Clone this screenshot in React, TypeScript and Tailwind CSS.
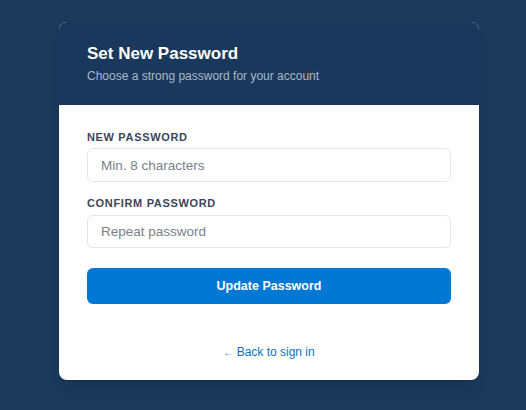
import React from "react";

export default function App() {
  return (
    <div
      className="w-[526px] h-[410px] bg-[#1b3a5c] pt-[22px] pl-[59px]"
      style={{ fontFamily: '"Liberation Sans", Arial, sans-serif' }}
    >
      <div className="w-[420px] h-[358px] bg-white rounded-lg overflow-hidden flex flex-col shadow-lg">
        <div className="bg-[#1a385b] h-[83px] px-[28px] pt-[21px]">
          <h1 className="text-white text-[17px] font-bold leading-[22px]">Set New Password</h1>
          <p className="text-[#a9b8c9] text-[12px] leading-[16px] mt-[3px]">
            Choose a strong password for your account
          </p>
        </div>
        <div className="px-[28px] pt-[25px] flex flex-col flex-1">
          <label className="text-[11px] font-bold tracking-[0.06em] text-[#3b4656] leading-[14px]">
            NEW PASSWORD
          </label>
          <input
            type="password"
            placeholder="Min. 8 characters"
            className="mt-[4px] h-[34px] w-full border border-[#e2e5ea] rounded-md px-[13px] text-[13.5px] placeholder:text-[#7a7f87] outline-none"
          />
          <label className="mt-[14px] text-[11px] font-bold tracking-[0.06em] text-[#3b4656] leading-[14px]">
            CONFIRM PASSWORD
          </label>
          <input
            type="password"
            placeholder="Repeat password"
            className="mt-[5px] h-[33px] w-full border border-[#e2e5ea] rounded-md px-[13px] text-[13.5px] placeholder:text-[#7a7f87] outline-none"
          />
          <button className="mt-[20px] h-[36px] w-full bg-[#0078d4] rounded-md text-white text-[12.5px] font-bold">
            Update Password
          </button>
          <div className="mt-[35px] text-center">
            <a className="text-[#0a74c8] text-[12px] leading-[16px]">
              <span className="text-[10px]">←</span> Back to sign in
            </a>
          </div>
        </div>
      </div>
    </div>
  );
}
